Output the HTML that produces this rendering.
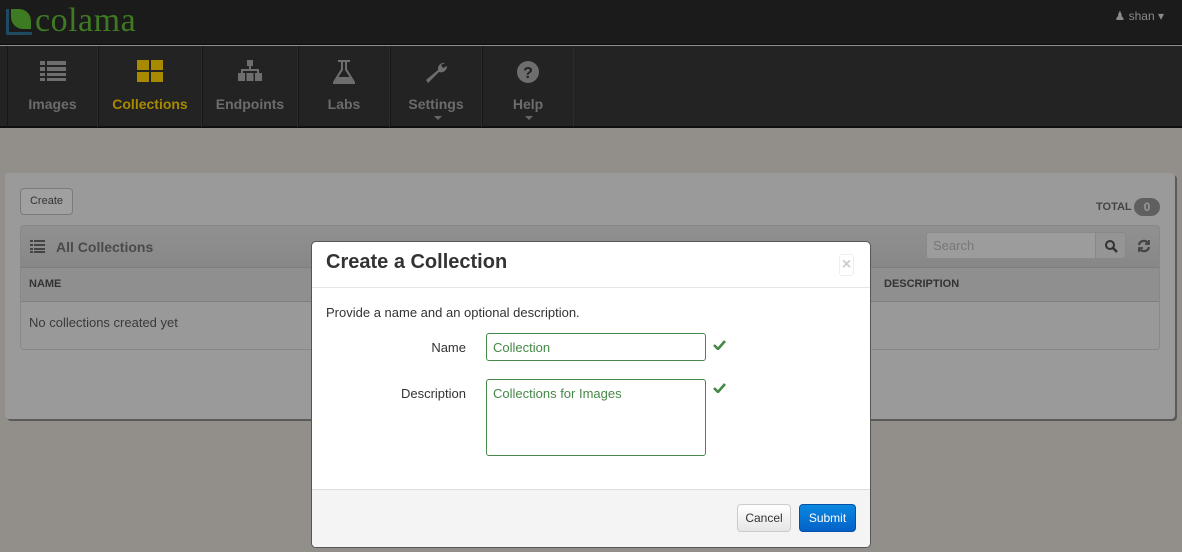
<!DOCTYPE html>
<html><head><meta charset="utf-8">
<style>
*{box-sizing:border-box;margin:0;padding:0}
body{width:1182px;height:552px;overflow:hidden;font-family:"Liberation Sans",sans-serif;background:#928e89;position:relative}
.top{position:absolute;left:0;top:0;width:1182px;height:45px;background:#1b1b1b;border-bottom:1px solid #0c0c0c}
.logo{position:absolute;left:6px;top:2px;font-family:"Liberation Serif",serif;font-size:34px;color:#3f7a22;letter-spacing:0.5px}
.logo .leaf{display:inline-block;width:26px;height:26px;border:3px solid #1f4a62;border-radius:1px;vertical-align:-4px;margin-right:3px;position:relative;border-right:none;border-top:none}
.logo .leaf:after{content:"";position:absolute;left:2px;top:0;width:20px;height:20px;background:#3d7a22;border-radius:0 12px 0 12px}
.user{position:absolute;right:18px;top:9px;color:#8a8a8a;font-size:12px}
.nav{position:absolute;left:0;top:46px;width:1182px;height:82px;background:#232323;border-bottom:2px solid #0e0e0e}
.nav .it{position:absolute;top:0;height:81px;border-left:1px solid #161616;border-right:1px solid #2c2c2c;text-align:center;color:#6c6c6c;font-size:14px;font-weight:bold}
.nav .it span{position:absolute;left:0;right:0;top:50px}
.nav .ic{position:absolute;left:50%;top:14px;transform:translateX(-50%)}
.panel{position:absolute;left:5px;top:173px;width:1170px;height:246px;background:#9a9a9a;border-radius:4px;box-shadow:2px 2px 0 #5a5a5a}
.btn{position:absolute;left:20px;top:188px;width:53px;height:27px;border:1px solid #7a7a7a;border-radius:4px;background:#a0a0a0;font-size:11px;color:#333;text-align:center;line-height:25px}
.total{position:absolute;left:1096px;top:201px;font-size:11px;font-weight:bold;color:#444}
.badge{position:absolute;left:1134px;top:198px;width:26px;height:18px;border-radius:9px;background:#5f5f5f;color:#999;font-size:12px;text-align:center;line-height:18px;font-weight:bold}
.tbl{position:absolute;left:20px;top:225px;width:1140px;height:125px;border:1px solid #888;border-radius:4px;background:#999;overflow:hidden}
.tbl .hd{height:42px;background:linear-gradient(#919191,#878787);border-bottom:1px solid #7e7e7e;font-weight:bold;font-size:14px;color:#4a4a4a;padding:13px 0 0 35px}
.tbl .th{height:34px;background:#8f8f8f;border-bottom:1px solid #7f7f7f;font-size:11px;color:#333;padding:10px 8px;font-weight:bold;position:relative}
.tbl .row{font-size:13px;color:#3a3a3a;padding:13px 8px}
.search{position:absolute;left:926px;top:232px;width:170px;height:27px;background:#9c9c9c;border:1px solid #8a8a8a;border-radius:3px 0 0 3px;font-size:13px;color:#777;padding:5px 6px}
.sbtn{position:absolute;left:1095px;top:232px;width:31px;height:27px;background:#959595;border:1px solid #888;border-radius:0 3px 3px 0}
.modal{position:absolute;left:311px;top:241px;width:560px;height:307px;background:#fff;border-radius:5px;border:1px solid #555;overflow:hidden}
.modal h3{position:absolute;left:14px;top:9px;font-size:20px;font-weight:bold;color:#333}
.modal .x{position:absolute;left:527px;top:12px;width:15px;height:22px;border:1px solid #eee;border-radius:3px;color:#ccc;font-size:16px;text-align:center;line-height:20px;font-weight:bold}
.modal .sep{position:absolute;left:0;right:0;top:45px;border-top:1px solid #e6e6e6}
.modal p{position:absolute;left:14px;top:63px;font-size:13px;color:#333}
.lbl{position:absolute;font-size:13px;color:#333;text-align:right;width:140px}
.inp{position:absolute;left:174px;width:220px;border:1px solid #468847;border-radius:3px;color:#468847;font-size:13px;padding:6px}
.chk{position:absolute;left:401px}
.foot{position:absolute;left:0;right:0;top:247px;bottom:0;background:#f4f4f4;border-top:1px solid #ddd}
.cancel{position:absolute;left:425px;top:14px;width:54px;height:28px;border:1px solid #ccc;border-radius:4px;background:linear-gradient(#fff,#e6e6e6);font-size:12px;color:#333;text-align:center;line-height:26px}
.submit{position:absolute;left:487px;top:14px;width:57px;height:28px;border:1px solid #0550a8;border-radius:4px;background:linear-gradient(#0a88e0,#0461c8);font-size:12px;color:#fff;text-align:center;line-height:26px}
</style></head><body>
<div class="top">
 <div class="logo"><span class="leaf"></span>colama</div>
 <div class="user">&#9823; shan &#9662;</div>
</div>
<div class="nav">
 <div class="it" style="left:7px;width:91px">
  <svg class="ic" width="26" height="22" viewBox="0 0 26 22" fill="#6e6e6e"><rect x="0" y="1" width="5" height="4"/><rect x="7" y="1" width="19" height="4"/><rect x="0" y="7" width="5" height="4"/><rect x="7" y="7" width="19" height="4"/><rect x="0" y="13" width="5" height="3"/><rect x="7" y="13" width="19" height="3"/><rect x="0" y="18" width="5" height="3"/><rect x="7" y="18" width="19" height="3"/></svg>
  <span>Images</span></div>
 <div class="it" style="left:98px;width:104px;color:#a88a00">
  <svg class="ic" width="26" height="22" viewBox="0 0 26 22" fill="#a88a00"><rect x="0" y="0" width="12" height="10"/><rect x="14" y="0" width="12" height="10"/><rect x="0" y="12" width="12" height="10"/><rect x="14" y="12" width="12" height="10"/></svg>
  <span>Collections</span></div>
 <div class="it" style="left:202px;width:96px">
  <svg class="ic" width="24" height="22" viewBox="0 0 24 22" fill="#6e6e6e"><rect x="9" y="0" width="6" height="6"/><rect x="11" y="6" width="2" height="4"/><rect x="3" y="9" width="18" height="2"/><rect x="3" y="9" width="2" height="4"/><rect x="19" y="9" width="2" height="4"/><rect x="0" y="13" width="7" height="8"/><rect x="8.5" y="13" width="7" height="8"/><rect x="17" y="13" width="7" height="8"/></svg>
  <span>Endpoints</span></div>
 <div class="it" style="left:298px;width:92px">
  <svg class="ic" width="22" height="24" viewBox="0 0 22 24" fill="#6e6e6e"><rect x="5" y="0" width="12" height="2"/><path d="M8 2h2v8L2 22h18L12 10V2h2v7l8 13v2H0v-2l8-13z"/><path d="M5 17h12l3 5H2z"/></svg>
  <span>Labs</span></div>
 <div class="it" style="left:390px;width:92px">
  <svg class="ic" width="24" height="24" viewBox="0 0 24 24" fill="#6e6e6e"><path d="M21 3a6 6 0 0 0-7 7L2 20l2 3 11-11a6 6 0 0 0 8-6l-4 2-2-3z"/></svg>
  <span>Settings</span><div style="position:absolute;left:43px;top:70px;border:4px solid transparent;border-top-color:#666"></div></div>
 <div class="it" style="left:482px;width:92px">
  <svg class="ic" width="24" height="24" viewBox="0 0 24 24"><circle cx="12" cy="12" r="11" fill="#6e6e6e"/><text x="12" y="18" text-anchor="middle" font-family="Liberation Sans" font-weight="bold" font-size="16" fill="#232323">?</text></svg>
  <span>Help</span><div style="position:absolute;left:42px;top:70px;border:4px solid transparent;border-top-color:#666"></div></div>
</div>
<div class="panel"></div>
<div class="btn">Create</div>
<div class="total">TOTAL</div><div class="badge">0</div>
<div class="tbl">
 <div class="hd"><svg style="position:absolute;left:9px;top:14px" width="15" height="13" viewBox="0 0 15 13" fill="#444"><rect x="0" y="0" width="3" height="2"/><rect x="4" y="0" width="11" height="2"/><rect x="0" y="4" width="3" height="2"/><rect x="4" y="4" width="11" height="2"/><rect x="0" y="8" width="3" height="2"/><rect x="4" y="8" width="11" height="2"/><rect x="0" y="11" width="3" height="2"/><rect x="4" y="11" width="11" height="2"/></svg>All Collections</div>
 <div class="th">NAME<span style="position:absolute;left:863px;top:10px">DESCRIPTION</span></div>
 <div class="row">No collections created yet</div>
</div>
<div class="search">Search</div>
<div class="sbtn"><svg style="position:absolute;left:8px;top:6px" width="14" height="14" viewBox="0 0 14 14"><circle cx="6" cy="6" r="4" fill="none" stroke="#333" stroke-width="2"/><path d="M9 9l4 4" stroke="#333" stroke-width="2.5"/></svg></div>
<svg style="position:absolute;left:1137px;top:239px" width="14" height="14" viewBox="0 0 14 14" fill="none" stroke="#444" stroke-width="2.2"><path d="M2 6a5 5 0 0 1 9-2"/><path d="M12 8a5 5 0 0 1-9 2"/><path d="M12 1v4H8" stroke-width="1.8"/><path d="M2 13V9h4" stroke-width="1.8"/></svg>
<div class="modal">
 <h3>Create a Collection</h3>
 <div class="x">×</div>
 <div class="sep"></div>
 <p>Provide a name and an optional description.</p>
 <div class="lbl" style="left:14px;top:98px">Name</div>
 <div class="inp" style="top:91px;height:28px">Collection</div>
 <svg class="chk" style="top:97px" width="13" height="11" viewBox="0 0 13 11"><path d="M1 6l4 4 7-8" fill="none" stroke="#468847" stroke-width="2.6"/></svg>
 <div class="lbl" style="left:14px;top:144px">Description</div>
 <div class="inp" style="top:137px;height:77px">Collections for Images</div>
 <svg class="chk" style="top:140px" width="13" height="11" viewBox="0 0 13 11"><path d="M1 6l4 4 7-8" fill="none" stroke="#468847" stroke-width="2.6"/></svg>
 <div class="foot">
  <div class="cancel">Cancel</div>
  <div class="submit">Submit</div>
 </div>
</div>
</body></html>
